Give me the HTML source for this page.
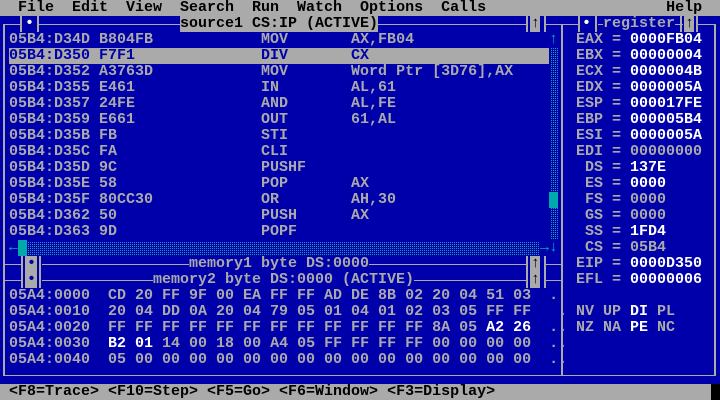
<!DOCTYPE html>
<html><head><style>
html,body{margin:0;padding:0;background:#0000aa;}
#s{position:relative;width:720px;height:400px;background:#0000aa;overflow:hidden;font-family:"Liberation Mono",monospace;font-size:15px;font-weight:bold;color:#aaa;}
.t{position:absolute;white-space:pre;line-height:16px;height:16px;}
.w{color:#fff}
.h{position:absolute;height:1px;background:#aaa}
.v{position:absolute;width:2px;background:#aaa}
.g{position:absolute;background:#aaa}
.dot{position:absolute;background:repeating-conic-gradient(#00aaaa 0 25%,#0000aa 0 100%) 0 0/2px 2px}
</style></head><body><div id="s">
<!-- menu -->
<div class="g" style="left:0;top:0;width:720px;height:16px"></div>
<div class="t" style="left:0;top:0;color:#000">  File  Edit  View  Search  Run  Watch  Options  Calls                    Help</div>
<!-- borders -->
<div class="v" style="left:3px;top:24px;height:352px"></div>
<div class="h" style="left:3px;top:24px;width:177px"></div>
<div class="h" style="left:378px;top:24px;width:185px"></div>
<div class="v" style="left:561px;top:24px;height:352px"></div>
<div class="h" style="left:561px;top:24px;width:155px"></div>
<div class="v" style="left:714px;top:24px;height:352px"></div>
<div class="h" style="left:3px;top:375px;width:713px"></div>
<!-- code title -->
<div class="g" style="left:20px;top:16px;width:19px;height:16px;background:#0000aa"></div>
<div class="v" style="left:20px;top:16px;height:16px"></div><div class="v" style="left:37px;top:16px;height:16px"></div>
<div class="t w" style="left:25px;top:16px">•</div>
<div class="g" style="left:180px;top:16px;width:198px;height:16px"></div>
<div class="t" style="left:180px;top:16px;color:#000">source1 CS:IP (ACTIVE)</div>
<div class="g" style="left:526px;top:16px;width:20px;height:16px;background:#0000aa"></div>
<div class="g" style="left:530px;top:16px;width:10px;height:16px"></div>
<div class="v" style="left:526px;top:16px;height:16px"></div><div class="v" style="left:544px;top:16px;height:16px"></div>
<div class="t" style="left:531px;top:16px;color:#000">↑</div>
<!-- register title -->
<div class="g" style="left:578px;top:16px;width:120px;height:16px;background:#0000aa"></div>
<div class="h" style="left:598px;top:24px;width:85px"></div>
<div class="v" style="left:578px;top:16px;height:16px"></div><div class="v" style="left:595px;top:16px;height:16px"></div>
<div class="t w" style="left:582px;top:16px">•</div>
<div class="t" style="left:603px;top:16px;background:#0000aa">register</div>
<div class="g" style="left:684px;top:16px;width:10px;height:16px"></div>
<div class="v" style="left:680px;top:16px;height:16px"></div><div class="v" style="left:696px;top:16px;height:16px"></div>
<div class="t" style="left:685px;top:16px;color:#000">↑</div>
<!-- highlight -->
<div class="g" style="left:9px;top:48px;width:540px;height:16px"></div>
<!-- code -->
<div class="t" style="left:9px;top:32px">05B4:D34D B804FB            MOV       AX,FB04</div>
<div class="t" style="left:9px;top:48px;color:#0000aa">05B4:D350 F7F1              DIV       CX</div>
<div class="t" style="left:9px;top:64px">05B4:D352 A3763D            MOV       Word Ptr [3D76],AX</div>
<div class="t" style="left:9px;top:80px">05B4:D355 E461              IN        AL,61</div>
<div class="t" style="left:9px;top:96px">05B4:D357 24FE              AND       AL,FE</div>
<div class="t" style="left:9px;top:112px">05B4:D359 E661              OUT       61,AL</div>
<div class="t" style="left:9px;top:128px">05B4:D35B FB                STI</div>
<div class="t" style="left:9px;top:144px">05B4:D35C FA                CLI</div>
<div class="t" style="left:9px;top:160px">05B4:D35D 9C                PUSHF</div>
<div class="t" style="left:9px;top:176px">05B4:D35E 58                POP       AX</div>
<div class="t" style="left:9px;top:192px">05B4:D35F 80CC30            OR        AH,30</div>
<div class="t" style="left:9px;top:208px">05B4:D362 50                PUSH      AX</div>
<div class="t" style="left:9px;top:224px">05B4:D363 9D                POPF</div>
<!-- scrollbars -->
<div class="t" style="left:549px;top:32px;color:#00aaaa">↑</div>
<div class="dot" style="left:550px;top:48px;width:8px;height:192px"></div>
<div class="g" style="left:549px;top:192px;width:9px;height:16px;background:#00aaaa"></div>
<div class="t" style="left:9px;top:240px;color:#00aaaa">←</div>
<div class="dot" style="left:27px;top:242px;width:513px;height:13px"></div>
<div class="g" style="left:18px;top:240px;width:9px;height:16px;background:#00aaaa"></div>
<div class="t" style="left:540px;top:240px;color:#00aaaa">→↓</div>
<!-- memory titles -->
<div class="h" style="left:3px;top:264px;width:186px"></div>
<div class="h" style="left:369px;top:264px;width:158px"></div>
<div class="h" style="left:3px;top:280px;width:150px"></div>
<div class="h" style="left:414px;top:280px;width:113px"></div>
<div class="h" style="left:546px;top:264px;width:16px"></div>
<div class="h" style="left:546px;top:280px;width:16px"></div>
<div class="g" style="left:21px;top:256px;width:21px;height:32px;background:#0000aa"></div>
<div class="g" style="left:25px;top:256px;width:12px;height:32px"></div>
<div class="v" style="left:21px;top:256px;height:32px;background:#aaa"></div>
<div class="v" style="left:39px;top:256px;height:32px"></div>
<div class="t" style="left:27px;top:256px;color:#0000aa">•</div>
<div class="t" style="left:27px;top:272px;color:#0000aa">•</div>
<div class="t" style="left:189px;top:256px">memory1 byte DS:0000</div>
<div class="t" style="left:153px;top:272px">memory2 byte DS:0000 (ACTIVE)</div>
<div class="g" style="left:526px;top:256px;width:20px;height:32px;background:#0000aa"></div>
<div class="g" style="left:530px;top:256px;width:10px;height:32px"></div>
<div class="v" style="left:526px;top:256px;height:32px"></div><div class="v" style="left:544px;top:256px;height:32px"></div>
<div class="t" style="left:531px;top:256px;color:#000">↑</div>
<div class="t" style="left:531px;top:272px;color:#000">↑</div>
<!-- memory data -->
<div class="t" style="left:9px;top:288px">05A4:0000  CD 20 FF 9F 00 EA FF FF AD DE 8B 02 20 04 51 03  .</div>
<div class="t" style="left:9px;top:304px">05A4:0010  20 04 DD 0A 20 04 79 05 01 04 01 02 03 05 FF FF   .</div>
<div class="t" style="left:9px;top:320px">05A4:0020  FF FF FF FF FF FF FF FF FF FF FF FF 8A 05 <span class="w">A2 26</span>  ..</div>
<div class="t" style="left:9px;top:336px">05A4:0030  <span class="w">B2 01</span> 14 00 18 00 A4 05 FF FF FF FF 00 00 00 00  ..</div>
<div class="t" style="left:9px;top:352px">05A4:0040  05 00 00 00 00 00 00 00 00 00 00 00 00 00 00 00  ..</div>
<!-- registers -->
<div class="t" style="left:576px;top:32px">EAX = <span class="w">0000FB04</span></div>
<div class="t" style="left:576px;top:48px">EBX = <span class="w">00000004</span></div>
<div class="t" style="left:576px;top:64px">ECX = <span class="w">0000004B</span></div>
<div class="t" style="left:576px;top:80px">EDX = <span class="w">0000005A</span></div>
<div class="t" style="left:576px;top:96px">ESP = <span class="w">000017FE</span></div>
<div class="t" style="left:576px;top:112px">EBP = <span class="w">000005B4</span></div>
<div class="t" style="left:576px;top:128px">ESI = <span class="w">0000005A</span></div>
<div class="t" style="left:576px;top:144px">EDI = 00000000</div>
<div class="t" style="left:576px;top:160px"> DS = <span class="w">137E</span></div>
<div class="t" style="left:576px;top:176px"> ES = <span class="w">0000</span></div>
<div class="t" style="left:576px;top:192px"> FS = 0000</div>
<div class="t" style="left:576px;top:208px"> GS = 0000</div>
<div class="t" style="left:576px;top:224px"> SS = <span class="w">1FD4</span></div>
<div class="t" style="left:576px;top:240px"> CS = 05B4</div>
<div class="t" style="left:576px;top:256px">EIP = <span class="w">0000D350</span></div>
<div class="t" style="left:576px;top:272px">EFL = <span class="w">00000006</span></div>
<div class="t" style="left:576px;top:304px">NV UP <span class="w">DI</span> PL</div>
<div class="t" style="left:576px;top:320px">NZ NA <span class="w">PE</span> NC</div>
<!-- status -->
<div class="g" style="left:0;top:384px;width:711px;height:16px"></div>
<div class="g" style="left:711px;top:384px;width:9px;height:16px;background:#000"></div>
<div class="t" style="left:0;top:384px;color:#000"> &lt;F8=Trace&gt; &lt;F10=Step&gt; &lt;F5=Go&gt; &lt;F6=Window&gt; &lt;F3=Display&gt;</div>
</div></body></html>
